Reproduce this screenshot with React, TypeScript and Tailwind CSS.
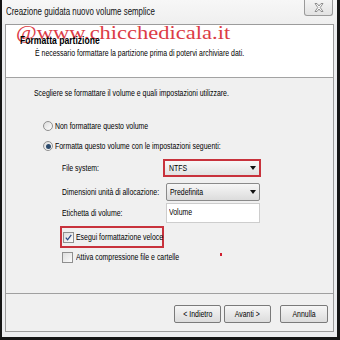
import React from "react";

function T({ children, className = "" }: { children: React.ReactNode; className?: string }) {
  return (
    <span className={"inline-block origin-left scale-x-[0.77] whitespace-nowrap leading-[10px] " + className}>
      {children}
    </span>
  );
}

function Radio({ checked }: { checked?: boolean }) {
  return (
    <span className="w-[10px] h-[10px] rounded-full border border-[#8f8f8f] bg-linear-to-br from-[#dcdcdc] to-[#ffffff] flex items-center justify-center shrink-0">
      {checked && <span className="w-[5px] h-[5px] rounded-full bg-[#2c4a6c]" />}
    </span>
  );
}

function Check({ checked }: { checked?: boolean }) {
  return (
    <span className="w-[11px] h-[11px] border border-[#8f8f8f] bg-linear-to-br from-[#dedede] to-[#fbfbfb] flex items-center justify-center shrink-0">
      {checked && (
        <svg width="9" height="9" viewBox="0 0 9 9">
          <path d="M1.8 4.6 L3.6 6.8 L7.3 1.8" fill="none" stroke="#2a4a86" strokeWidth="1.3" />
        </svg>
      )}
    </span>
  );
}

function Arrow() {
  return (
    <svg width="6" height="4" viewBox="0 0 6 4" className="shrink-0">
      <path d="M0 0 L6 0 L3 4 Z" fill="#111" />
    </svg>
  );
}

function Btn({ children, className = "" }: { children: React.ReactNode; className?: string }) {
  return (
    <div
      className={
        "h-[18px] rounded-[2px] border border-[#7a7a7a] bg-linear-to-b from-[#f6f6f6] to-[#dcdcdc] flex items-center justify-center " +
        className
      }
    >
      <span className="inline-block origin-center scale-x-[0.77] whitespace-nowrap leading-[10px] text-[9px] text-black">{children}</span>
    </div>
  );
}

export default function App() {
  return (
    <div className="w-[340px] h-[340px] bg-[#151515] flex pl-[2px] pr-[3px] pb-[3px] font-['Liberation_Sans',Arial,sans-serif] text-[9px] leading-[10px] text-black">
      <div className="flex-1 flex flex-col bg-[#ecedef]">
        {/* title bar */}
        <div className="h-[24px] relative flex items-center pl-[4px] bg-linear-to-b from-[#f7f7f7] to-[#efefef]">
          <span className="inline-block origin-left scale-x-[0.79] whitespace-nowrap text-[10px] leading-[10px] text-[#111]">
            Creazione guidata nuovo volume semplice
          </span>
          <div className="absolute right-[4px] top-0 w-[29px] h-[16px] border border-t-0 border-[#9a9a9a] rounded-b-[3px] bg-linear-to-b from-[#f4f4f4] to-[#e2e2e2] flex items-center justify-center">
            <svg width="10" height="9" viewBox="0 0 10 9">
              <path
                d="M1 0.5 L3 0.5 L5 3 L7 0.5 L9 0.5 L6.2 4.5 L9 8.5 L7 8.5 L5 6 L3 8.5 L1 8.5 L3.8 4.5 Z"
                fill="#fafafa"
                stroke="#777"
                strokeWidth="0.8"
              />
            </svg>
          </div>
        </div>

        {/* client */}
        <div className="mx-[3px] mb-[5px] flex-1 border border-[#9c9c9c] flex flex-col">
          {/* header */}
          <div className="h-[53px] bg-white border-b border-[#a3a3a3] relative shrink-0">
            <div className="absolute left-[10px] top-[-1px] text-[18px] leading-[18px] font-['Liberation_Serif',serif] text-[#dc3c46] whitespace-nowrap origin-left scale-x-[1.25] z-0">
              @www.chicchedicala.it
            </div>
            <div className="relative z-10 pl-[14px] pt-[11px] flex flex-col">
              <div className="h-[10px] flex items-center">
                <T className="text-[10px] font-bold scale-x-[0.86]">Formatta partizione</T>
              </div>
              <div className="pl-[15px] mt-[2px] h-[10px] flex items-center">
                <T className="text-[9px]">È necessario formattare la partizione prima di potervi archiviare dati.</T>
              </div>
            </div>
          </div>

          {/* body */}
          <div className="flex-1 bg-[#f0f0f0] flex flex-col relative">
            <div className="mt-[10px] h-[10px] pl-[28px] flex items-center">
              <T>Scegliere se formattare il volume e quali impostazioni utilizzare.</T>
            </div>

            <div className="mt-[20px] h-[16px] pl-[37px] flex items-center gap-[2px]">
              <Radio />
              <T>Non formattare questo volume</T>
            </div>
            <div className="mt-[4px] h-[16px] pl-[37px] flex items-center gap-[2px]">
              <Radio checked />
              <T>Formatta questo volume con le impostazioni seguenti:</T>
            </div>

            <div className="mt-[5px] h-[18px] pl-[56px] flex items-center">
              <div className="w-[101px] flex items-center">
                <T>File system:</T>
              </div>
              <div className="w-[98px] h-[18px] border-2 border-[#c8323c] bg-linear-to-b from-[#f8f8f8] to-[#e2e2e2] flex items-center justify-between pl-[4px] pr-[3px]">
                <T>NTFS</T>
                <Arrow />
              </div>
            </div>

            <div className="mt-[6px] h-[18px] pl-[56px] flex items-center">
              <div className="w-[104px] flex items-center">
                <T>Dimensioni unità di allocazione:</T>
              </div>
              <div className="w-[94px] h-[18px] border border-[#8a8a8a] rounded-[2px] bg-linear-to-b from-[#f7f7f7] to-[#dcdcdc] flex items-center justify-between pl-[3px] pr-[3px]">
                <T>Predefinita</T>
                <Arrow />
              </div>
            </div>

            <div className="mt-[2px] h-[20px] pl-[56px] flex items-center">
              <div className="w-[104px] flex items-center">
                <T>Etichetta di volume:</T>
              </div>
              <div className="w-[94px] h-[20px] border border-[#cdcdcd] bg-white pl-[2px] pt-[3px] flex items-start">
                <T>Volume</T>
              </div>
            </div>

            <div className="mt-[3px] h-[22px] pl-[54px] flex items-center">
              <div className="w-[104px] h-[22px] border-2 border-[#c8323c] flex items-center pl-[1px] gap-[2px]">
                <Check checked />
                <T className="scale-x-[0.74]">Esegui formattazione veloce</T>
              </div>
            </div>

            <div className="mt-[2px] h-[14px] pl-[56px] flex items-center gap-[3px]">
              <Check />
              <T>Attiva compressione file e cartelle</T>
            </div>

            <span className="absolute left-[214px] top-[175px] w-[2px] h-[3px] bg-[#d02030]" />

            <div className="flex-1" />

            <div className="h-[38px] border-t border-[#a0a0a0] flex justify-end items-start pt-[11px] pr-[5px]">
              <Btn className="w-[47px]">&lt; Indietro</Btn>
              <Btn className="w-[47px] ml-[3px]">Avanti &gt;</Btn>
              <Btn className="w-[48px] ml-[9px]">Annulla</Btn>
            </div>
          </div>
        </div>
      </div>
    </div>
  );
}
